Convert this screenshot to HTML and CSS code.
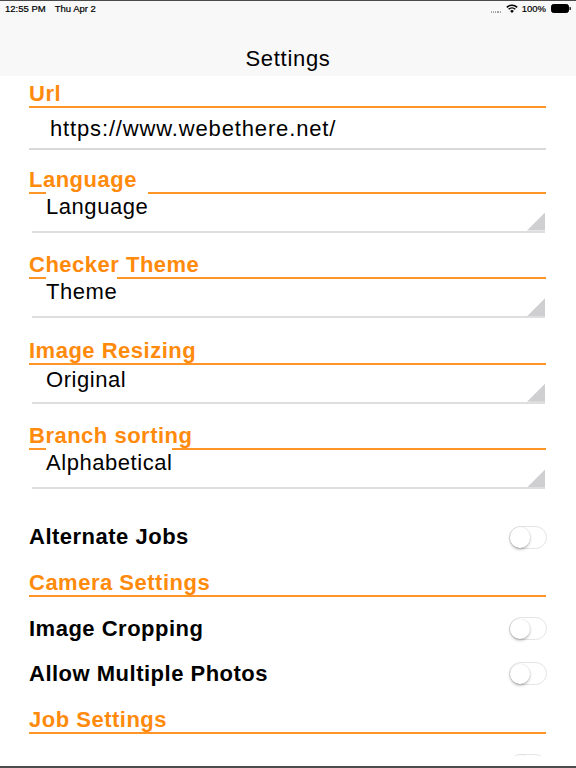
FILE: index.html
```html
<!DOCTYPE html>
<html lang="en">
<head>
<meta charset="utf-8">
<title>Settings</title>
<link rel="stylesheet" href="styles.css">
</head>
<body>
<div class="screen">
  <header class="top">
    <div class="status">
      <div class="status-left"><span>12:55 PM</span><span>Thu Apr 2</span></div>
      <div class="status-right">
        <span class="dots"><i></i><i></i><i></i><i></i><i></i></span>
        <svg class="wifi" width="12" height="9" viewBox="0 0 12 9">
          <path d="M6 8.9 L4.1 6.9 A2.7 2.7 0 0 1 7.9 6.9 Z" fill="#000"/>
          <path d="M2.7 5.3 A4.7 4.7 0 0 1 9.3 5.3" fill="none" stroke="#000" stroke-width="1.5"/>
          <path d="M0.8 3.4 A7.4 7.4 0 0 1 11.2 3.4" fill="none" stroke="#000" stroke-width="1.5"/>
        </svg>
        <span>100%</span>
        <svg class="battery" width="20" height="9" viewBox="0 0 20 9">
          <rect x="0.5" y="0.5" width="17" height="8" rx="2" fill="#000" stroke="#000"/>
          <rect x="18.5" y="3" width="1.3" height="3" rx="0.6" fill="#000"/>
        </svg>
      </div>
    </div>
    <div class="nav"><h1 class="title">Settings</h1></div>
  </header>

  <main class="list">
    <section class="field">
      <div class="label">Url</div>
      <div class="input">https://www.webethere.net/</div>
    </section>

    <section class="field gap-first">
      <div class="label">Language</div>
      <div class="picker"><span class="value">Language</span><span class="corner"></span></div>
    </section>

    <section class="field gap">
      <div class="label">Checker Theme</div>
      <div class="picker"><span class="value">Theme</span><span class="corner"></span></div>
    </section>

    <section class="field gap">
      <div class="label">Image Resizing</div>
      <div class="picker"><span class="value value-plain">Original</span><span class="corner"></span></div>
    </section>

    <section class="field gap">
      <div class="label">Branch sorting</div>
      <div class="picker"><span class="value">Alphabetical</span><span class="corner"></span></div>
    </section>

    <div class="row row-first"><span class="row-text">Alternate Jobs</span><span class="switch"></span></div>

    <div class="label section-label">Camera Settings</div>
    <div class="row row-after-label"><span class="row-text">Image Cropping</span><span class="switch"></span></div>
    <div class="row"><span class="row-text">Allow Multiple Photos</span><span class="switch"></span></div>

    <div class="label section-label">Job Settings</div>
    <div class="row row-after-label"><span class="row-text"></span><span class="switch"></span></div>
  </main>

  <footer class="bottom"></footer>
</div>
</body>
</html>
```
FILE: styles.css
```css
* { box-sizing: border-box; }

html, body {
  margin: 0;
  padding: 0;
  background: #ffffff;
}

body {
  font-family: "Liberation Sans", Arial, Helvetica, sans-serif;
  color: #000;
}

.screen {
  width: 576px;
  height: 768px;
  display: flex;
  flex-direction: column;
  border-top: 1px solid #4a4a4a;
  border-bottom: 2px solid #4d4d4d;
  overflow: hidden;
}

/* header */
.top {
  flex: none;
  height: 75px;
  background: #f8f8f8;
  display: flex;
  flex-direction: column;
}

.status {
  height: 15px;
  display: flex;
  justify-content: space-between;
  align-items: center;
  padding: 0 5px 0 5px;
  font-size: 9.5px;
  line-height: 15px;
  -webkit-text-stroke: 0.2px #000;
}

.status-left {
  display: flex;
  gap: 9px;
}

.status-right {
  display: flex;
  align-items: center;
  gap: 4px;
}

.dots {
  display: inline-flex;
  gap: 1px;
  align-items: flex-end;
  height: 8px;
  margin-right: 1px;
}

.dots i {
  display: block;
  width: 1.2px;
  height: 1.2px;
  border-radius: 50%;
  background: #9a9a9a;
}

.wifi { display: block; }
.battery { display: block; margin-left: 1px; }

.nav {
  flex: 1;
  display: flex;
  align-items: flex-end;
  justify-content: center;
  padding-bottom: 4px;
}

.title {
  margin: 0;
  font-size: 22px;
  line-height: 26px;
  font-weight: 400;
  letter-spacing: 0.7px;
}

/* list */
.list {
  flex: 1;
  min-height: 0;
  overflow: hidden;
  padding: 3.5px 30px 0 29px;
  background: #fff;
}

.label {
  font-size: 22px;
  line-height: 25px;
  padding-top: 1px;
  font-weight: 700;
  letter-spacing: 0.5px;
  color: #ff8a0c;
  border-bottom: 2px solid #ff9526;
}

.input {
  padding: 8px 0 6px 21px;
  font-size: 22px;
  line-height: 26px;
  letter-spacing: 0.85px;
  border-bottom: 2px solid #d9d9d9;
}

.gap-first { margin-top: 16px; }
.gap { margin-top: 18.67px; }

.picker {
  margin: -2px 1px 0 3px;
  height: 41px;
  display: flex;
  justify-content: space-between;
  border-bottom: 2px solid #dedede;
}

.value {
  align-self: flex-start;
  margin-left: 14px;
  font-size: 22px;
  line-height: 30px;
  letter-spacing: 0.55px;
  background: #fff;
}

.value-plain {
  margin-top: 4px;
  line-height: 26px;
}

.corner {
  align-self: flex-end;
  width: 18px;
  height: 18px;
  background: #cfcfd1;
  clip-path: polygon(100% 0, 100% 100%, 0 100%);
}

.row {
  height: 45px;
  display: flex;
  align-items: center;
  justify-content: space-between;
}

.row-first { margin-top: 25.5px; }
.row-after-label { margin-top: 8.8px; }
.section-label { margin-top: 9.5px; }

.row-text {
  font-size: 22px;
  line-height: 26px;
  font-weight: 700;
  letter-spacing: 0.5px;
}

.switch {
  width: 38px;
  height: 23px;
  margin-right: -1px;
  border: 1.5px solid #e4e4e4;
  border-radius: 12px;
  background: #fff;
  display: flex;
  align-items: center;
}

.switch::before {
  content: "";
  display: block;
  width: 20.5px;
  height: 20.5px;
  margin-left: -0.5px;
  border-radius: 50%;
  background: #fff;
  box-shadow: 0 1.5px 3px rgba(0, 0, 0, 0.28), 0 0 0 0.5px rgba(0, 0, 0, 0.05);
}

.bottom {
  flex: none;
  height: 10px;
  background: #fff;
}
```
